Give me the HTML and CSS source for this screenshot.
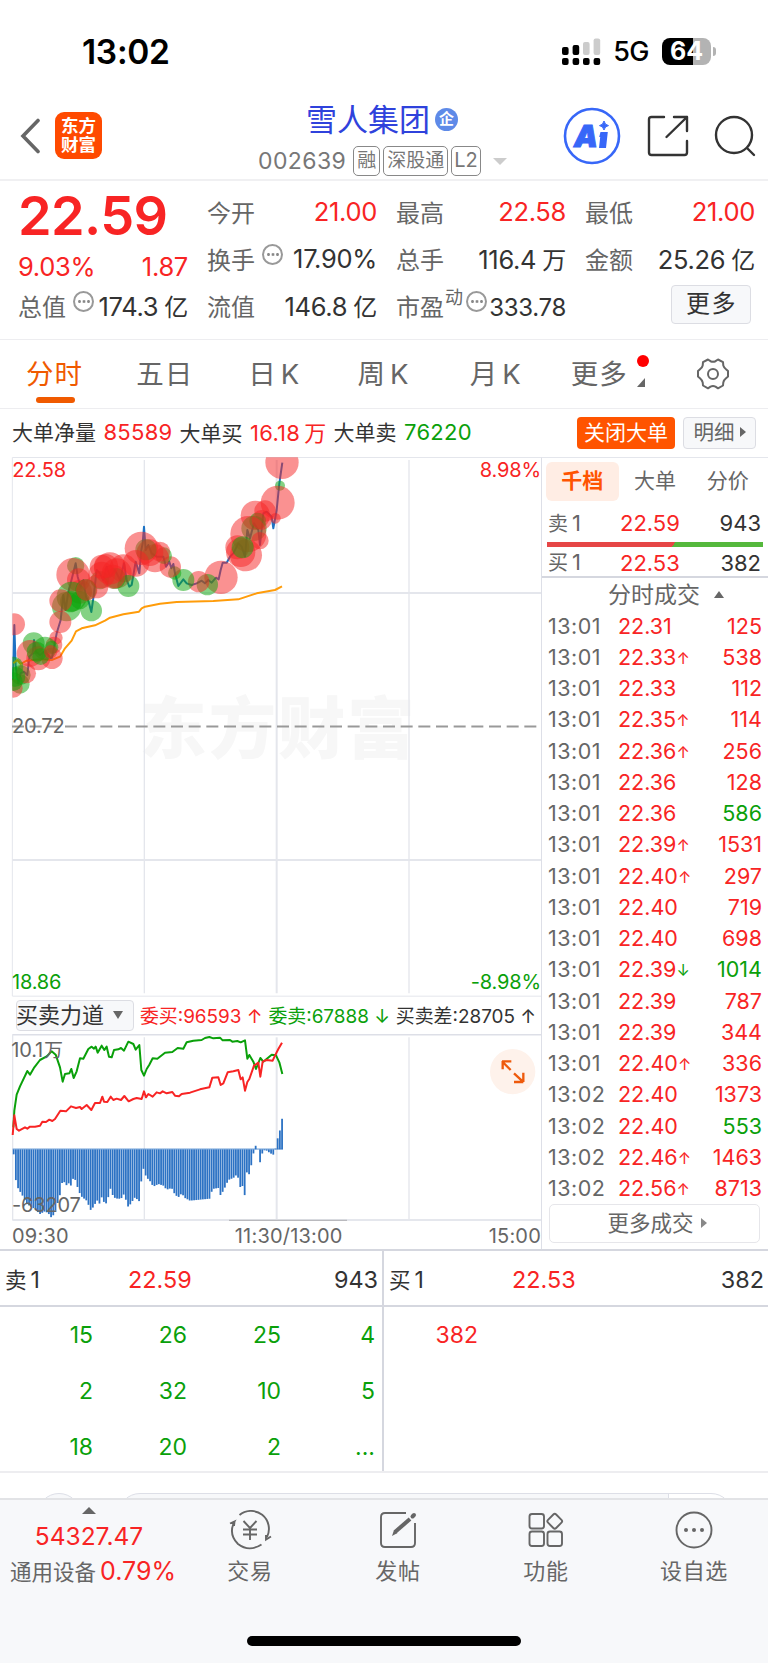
FILE: index.html
```html
<!DOCTYPE html>
<html lang="zh-CN">
<head>
  <meta charset="UTF-8">
  <meta name="viewport" content="width=device-width, initial-scale=1.0">
  <title>雪人集团 002639</title>
  <link rel="stylesheet" href="styles.css">
</head>
<body>
  <div class="status-bar">
    <span class="clock">13:02</span>
    <div class="status-right">
      <svg width="39" height="28" viewBox="0 0 39 28">
        <g fill="#000">
          <rect x="0" y="9" width="6.6" height="8" rx="2"/><rect x="10.6" y="7" width="6.6" height="10" rx="2"/>
          <rect x="0" y="20" width="6.6" height="7" rx="2"/><rect x="10.6" y="20" width="6.6" height="7" rx="2"/>
          <rect x="21" y="20" width="6.6" height="7" rx="2"/><rect x="31.6" y="20" width="6.6" height="7" rx="2"/>
        </g>
        <g fill="#ccc"><rect x="21" y="4" width="6.6" height="13" rx="2"/><rect x="31.6" y="0.5" width="6.6" height="16.5" rx="2"/></g>
      </svg>
      <span class="network">5G</span>
      <span class="battery">64</span>
      <span class="battery-tip"></span>
    </div>
  </div>

  <header>
    <div class="header-left">
      <svg width="22" height="36" viewBox="0 0 22 36"><path d="M18 2.5 3 18 18 33.5" fill="none" stroke="#666" stroke-width="3.6" stroke-linecap="round"/></svg>
      <div class="logo">东方<br>财富</div>
    </div>
    <div class="stock">
      <div class="stock-name">雪人集团<span class="badge">企</span></div>
      <div class="stock-code">002639<span class="tag">融</span><span class="tag">深股通</span><span class="tag">L2</span><i class="caret"></i></div>
    </div>
    <div class="header-right">
      <svg width="58" height="58" viewBox="0 0 58 58">
        <circle cx="29" cy="29" r="27" fill="none" stroke="#3767f8" stroke-width="2.6"/>
        <text class="ai" x="11" y="40">A</text>
        <path d="M37.5 25h7.300l-1.800 16h-7l1.200-11h-1z" fill="#3767f8"/>
        <path d="M41 14q.8 4 4.5 4.6Q41.800 19.200 41 23q-.8-3.800-4.500-4.400Q40.200 18 41 14z" fill="#3767f8" stroke="#3767f8"/>
      </svg>
      <svg width="42" height="42" viewBox="0 0 42 42" fill="none" stroke="#333" stroke-width="2.4" stroke-linecap="round" stroke-linejoin="round">
        <path d="M17 2H4.500Q2 2 2 4.500V37.500Q2 40 4.500 40H37.500Q40 40 40 37.500V26M27 2H40V16M40 2 19.500 22"/>
      </svg>
      <svg width="42" height="42" viewBox="0 0 42 42" fill="none" stroke="#333" stroke-width="2.400" stroke-linecap="round">
        <circle cx="20" cy="20" r="18"/><path d="M33 33 40 40"/>
      </svg>
    </div>
  </header>

  <section class="quote">
    <div class="cell price-cell"><b class="price">22.59</b></div>
    <div class="cell"><label>今开</label><span class="red">21.00</span></div>
    <div class="cell"><label>最高</label><span class="red">22.58</span></div>
    <div class="cell"><label>最低</label><span class="red">21.00</span></div>
    <div class="cell change"><span class="red">9.03%</span><span class="red">1.87</span></div>
    <div class="cell"><label>换手<i class="dots"></i></label><span>17.90%</span></div>
    <div class="cell"><label>总手</label><span>116.4<em>万</em></span></div>
    <div class="cell"><label>金额</label><span>25.26<em>亿</em></span></div>
    <div class="cell"><label>总值<i class="dots"></i></label><span>174.3<em>亿</em></span></div>
    <div class="cell"><label>流值</label><span>146.8<em>亿</em></span></div>
    <div class="cell pe"><label>市盈<sup>动</sup><i class="dots"></i></label><span>333.78</span></div>
    <div class="cell more-cell"><button class="more">更多</button></div>
  </section>

  <nav class="tabs">
    <a class="active">分时</a>
    <a>五日</a>
    <a>日<s>K</s></a>
    <a>周<s>K</s></a>
    <a>月<s>K</s></a>
    <a class="more-tab">更多<i class="red-dot"></i><i class="corner"></i></a>
    <svg width="32" height="32" viewBox="0 0 32 32" fill="none" stroke="#666" stroke-width="2" stroke-linejoin="round">
      <path d="M11 1.500 13.500 3.200Q16 4.200 18.500 3.200L21 1.500 26 4.200 26.300 7.500Q27 9.800 29 11.200L31 13V18.500L29 20.300Q26.800 22 26.300 24.500L26 27.500 21 30.300 18.500 28.600Q16 27.600 13.500 28.600L11 30.300 6 27.500 5.700 24.500Q5 22 3 20.300L1 18.500V13L3 11.200Q5.200 9.800 5.700 7.500L6 4.200Z"/>
      <circle cx="16" cy="16" r="5"/>
    </svg>
  </nav>

  <div class="big-order">
    <span>大单净量 <b class="red">85589</b></span>
    <span>大单买 <b class="red">16.18<em>万</em></b></span>
    <span>大单卖 <b class="green">76220</b></span>
    <button class="close-big">关闭大单</button>
    <button class="detail">明细<i></i></button>
  </div>

  <main>
    <div class="charts">
      <!-- 分时图 -->
      <svg class="main-chart" width="541" height="540" viewBox="0 141 1623 1620">
        <defs><clipPath id="plot"><rect x="37" y="142" width="1586" height="1618"/></clipPath></defs>
        <text class="watermark" x="418" y="1028">东方财富</text>
        <g stroke="#e4e6ec" fill="none">
          <path stroke-width="3" d="M37 1758V142.500H1623M37 1758.500H1623"/>
          <path stroke-width="4" d="M433 150V1750M1227 150V1750"/>
          <path stroke-width="6" d="M37 549H1623M37 1350H1623M830 150V1750"/>
        </g>
        <path class="mid" d="M36 949.500H1623"/>
        <g clip-path="url(#plot)">
          <polyline class="price-line" points="38,810 43,645 47,770 55,820 62,790 72,785 82,795 88,740 98,730 102,690 108,725 120,735 132,725 145,735 155,748 170,670 182,630 190,555 197,600 205,545 212,520 227,460 233,500 242,530 250,510 258,560 266,575 274,606 282,550 290,480 300,490 310,510 320,470 330,500 345,480 360,510 372,460 380,510 388,530 395,525 407,455 418,490 424,420 428,400 432,350 437,420 445,405 455,430 470,440 490,440 498,470 508,455 514,475 520,462 525,490 535,528 550,508 560,520 575,525 590,520 605,512 615,520 625,510 635,518 648,503 656,508 662,480 668,458 680,458 690,440 700,430 715,400 725,410 735,440 742,360 750,385 762,340 775,360 780,405 790,310 800,305 815,320 820,355 830,300 838,220 847,158"/>
          <polyline class="avg-line" points="40,760 52,750 62,762 80,752 120,748 155,750 180,740 195,715 215,692 228,664 245,655 285,646 315,632 330,623 370,613 417,605 425,595 435,590 480,581 530,576 640,573 715,568 770,550 825,540 846,529"/>
          <g id="bubbles"></g>
        </g>
        <text class="axis red-fill" x="37" y="202">22.58</text>
        <text class="axis red-fill" x="1623" y="202" text-anchor="end">8.98%</text>
        <text class="axis" x="36" y="970">20.72</text>
        <text class="axis green-fill" x="36" y="1736">18.86</text>
        <text class="axis green-fill" x="1623" y="1736" text-anchor="end">-8.98%</text>
      </svg>

      <div class="force-row">
        <button class="force">买卖力道<i></i></button>
        <span class="red">委买:96593 ↑</span>
        <span class="green">委卖:67888 ↓</span>
        <span>买卖差:28705 ↑</span>
      </div>

      <!-- 买卖力道 -->
      <svg class="force-chart" width="541" height="187" viewBox="0 190 1623 561">
        <g stroke="#e4e6ec" fill="none">
          <path stroke-width="5" stroke="#dddfe7" d="M37 192H1623M37 748H1623"/>
          <path stroke-width="4" d="M38 192V748M433 200V745M1227 200V745"/>
          <path stroke-width="6" d="M830 200V745"/>
        </g>
        <path d="M687 749H1041" stroke="#b9b9bd" stroke-width="4"/>
        <g id="bars"></g>
        <polyline class="sell-line" points="40,470 43,420 50,372 60,347 82,301 90,312 103,290 120,268 140,257 155,242 167,252 180,290 188,333 195,310 208,308 214,295 221,322 230,302 240,263 250,264 265,235 275,228 282,234 287,228 293,246 305,225 313,238 320,228 327,258 335,260 342,238 355,236 363,232 372,240 385,213 400,220 407,237 418,223 424,298 432,315 440,295 448,282 458,263 472,264 495,246 517,244 533,232 550,234 560,215 580,210 605,208 615,202 628,199 640,203 660,201 668,209 690,208 697,213 712,211 722,215 735,209 742,264 748,253 760,273 768,295 781,262 790,273 815,252 828,254 838,275 847,310"/>
        <polyline class="buy-line" points="38,493 43,434 50,475 57,480 75,470 82,474 90,468 105,468 120,465 127,453 138,454 148,447 157,451 165,445 181,420 198,422 213,407 228,412 240,409 245,415 260,403 274,418 285,397 300,397 307,378 312,393 322,394 332,378 340,388 350,384 363,388 373,376 386,392 400,385 410,382 425,385 432,362 438,380 445,370 458,378 470,365 480,368 488,362 500,368 517,364 525,375 537,377 545,370 570,366 600,356 628,350 637,321 655,320 662,343 670,338 683,305 700,302 715,298 722,326 728,320 735,360 742,334 748,325 762,285 775,276 781,318 788,273 800,268 818,270 825,255 835,235 846,216"/>
        <text class="axis" x="34" y="258">10.1<tspan dx="3" font-size="57">万</tspan></text>
        <text class="axis" x="36" y="725">-63207</text>
        <circle cx="1538" cy="303" r="68" fill="#fef2eb"/>
        <path d="M1508 271V296M1506 272H1534M1508 274 1532 298M1570 306V334M1542 334H1570M1542 308 1568 332" fill="none" stroke="#ee5a0c" stroke-width="7"/>
      </svg>

      <div class="times"><span>09:30</span><span>11:30/13:00</span><span>15:00</span></div>
    </div>

    <aside>
      <div class="side-tabs"><a class="active">千档</a><a>大单</a><a>分价</a></div>
      <div class="level"><span>卖<b>1</b></span><b class="red">22.59</b><b>943</b></div>
      <div class="ratio"></div>
      <div class="level buy-level"><span>买<b>1</b></span><b class="red">22.53</b><b>382</b></div>
      <div class="deal-title">分时成交<i></i></div>
      <div id="deals"></div>
      <button class="more-deals">更多成交<i></i></button>
    </aside>
  </main>

  <section class="depth">
    <div class="side">
      <div class="depth-head"><span>卖<b>1</b></span><b class="red">22.59</b><b>943</b></div>
      <div class="orders green">
        <span>15</span><span>26</span><span>25</span><span>4</span>
        <span>2</span><span>32</span><span>10</span><span>5</span>
        <span>18</span><span>20</span><span>2</span><span>...</span>
      </div>
    </div>
    <div class="side">
      <div class="depth-head"><span>买<b>1</b></span><b class="red">22.53</b><b>382</b></div>
      <div class="orders red"><span>382</span></div>
    </div>
  </section>

  <div class="peek"><i class="peek-circle"></i><i class="peek-box"></i></div>

  <footer>
    <div class="index">
      <i class="up"></i>
      <b class="red">54327.47</b>
      <div>通用设备<b class="red">0.79%</b></div>
    </div>
    <a>
      <svg width="44" height="40" viewBox="0 0 44 40" fill="none" stroke="#666" stroke-width="1.900">
        <path d="M11.500 5A18 18 0 0 1 39 27M2 13.500 6.500 11.500Q0 24 10 34 21 42.500 33.500 34.500M6.500 11.500 6 16M43 26.500 38 29.500 38 25"/>
        <path d="M15.500 11 22 18 28.500 11M22 18V30M15 19.500H29M15 24.500H29"/>
      </svg>
      交易
    </a>
    <a>
      <svg width="40" height="40" viewBox="0 0 40 40" fill="none" stroke="#666" stroke-width="1.900">
        <path d="M28 3H7Q3 3 3 7V33Q3 37 7 37H33Q37 37 37 33V13"/>
        <path d="M17 22 32 9" stroke-width="4"/><path d="M14 26 16 20 19.500 23Z" fill="#666" stroke="none"/><path d="M34.500 6.500 36 5" stroke-width="4" stroke-linecap="round"/>
      </svg>
      发帖
    </a>
    <a>
      <svg width="40" height="40" viewBox="0 0 40 40" fill="none" stroke="#666" stroke-width="1.900">
        <rect x="3.500" y="4" width="14.500" height="14.500" rx="2.500"/><rect x="3.500" y="21.500" width="14.500" height="14.500" rx="2.500"/><rect x="21.500" y="21.500" width="14.500" height="14.500" rx="2.500"/>
        <rect x="23" y="5.500" width="11.500" height="11.500" rx="2" transform="rotate(45 28.750 11.250)"/>
      </svg>
      功能
    </a>
    <a>
      <svg width="40" height="40" viewBox="0 0 40 40"><circle cx="20" cy="20" r="17.500" fill="none" stroke="#666" stroke-width="1.900"/><g fill="#666"><circle cx="12" cy="20" r="2"/><circle cx="20" cy="20" r="2"/><circle cx="28" cy="20" r="2"/></g></svg>
      设自选
    </a>
    <div class="home-bar"></div>
  </footer>

  <script>
    // 时间 价格 方向 手数 颜色
    const deals = [
      ['13:01', '22.31', '', 125, 'red'],
      ['13:01', '22.33', '↑', 538, 'red'],
      ['13:01', '22.33', '', 112, 'red'],
      ['13:01', '22.35', '↑', 114, 'red'],
      ['13:01', '22.36', '↑', 256, 'red'],
      ['13:01', '22.36', '', 128, 'red'],
      ['13:01', '22.36', '', 586, 'green'],
      ['13:01', '22.39', '↑', 1531, 'red'],
      ['13:01', '22.40', '↑', 297, 'red'],
      ['13:01', '22.40', '', 719, 'red'],
      ['13:01', '22.40', '', 698, 'red'],
      ['13:01', '22.39', '↓', 1014, 'green'],
      ['13:01', '22.39', '', 787, 'red'],
      ['13:01', '22.39', '', 344, 'red'],
      ['13:01', '22.40', '↑', 336, 'red'],
      ['13:02', '22.40', '', 1373, 'red'],
      ['13:02', '22.40', '', 553, 'green'],
      ['13:02', '22.46', '↑', 1463, 'red'],
      ['13:02', '22.56', '↑', 8713, 'red']
    ];

    document.getElementById('deals').innerHTML = deals.map(d =>
      `<div class="deal"><span>${d[0]}</span><b class="red">${d[1]}<i class="${d[2] === '↓' ? 'green' : 'red'}">${d[2]}</i></b><b class="${d[4]}">${d[3]}</b></div>`
    ).join('');

    // x, y, 半径, 买(r)/卖(g)
    const bubbles = [
      [846,157,50,'r'],[840,227,15,'g'],[833,278,51,'r'],[826,325,16,'r'],[795,303,32,'r'],[766,316,44,'r'],
      [762,355,38,'g'],[773,333,25,'g'],[785,330,30,'r'],[780,392,26,'r'],[745,372,54,'r'],[738,436,48,'r'],
      [722,427,44,'r'],[712,412,36,'r'],[728,412,33,'g'],[663,502,50,'r'],[622,524,32,'g'],[596,515,32,'r'],
      [550,510,33,'g'],[524,489,20,'g'],[511,471,32,'r'],[491,437,25,'g'],[480,425,30,'r'],[465,445,42,'r'],
      [450,428,40,'r'],[438,419,32,'g'],[424,415,50,'r'],[408,460,40,'r'],[370,475,42,'r'],[350,490,45,'r'],
      [385,528,33,'g'],[345,505,32,'g'],[300,510,28,'g'],[330,475,48,'r'],[305,470,36,'r'],[305,495,40,'r'],
      [340,500,36,'r'],[318,468,36,'r'],[290,530,35,'r'],[227,467,26,'g'],[219,494,50,'r'],[236,510,35,'r'],
      [240,545,36,'r'],[215,560,45,'g'],[200,590,44,'g'],[212,575,32,'g'],[258,540,32,'g'],[240,570,28,'g'],
      [260,540,32,'r'],[182,572,34,'r'],[274,602,32,'g'],[181,636,33,'r'],[42,643,33,'r'],[168,683,20,'r'],
      [162,705,25,'r'],[156,745,32,'r'],[101,700,33,'g'],[135,715,35,'g'],[90,730,40,'r'],[115,745,36,'r'],
      [110,725,30,'g'],[122,740,25,'g'],[155,712,20,'g'],[62,795,30,'g'],[60,822,29,'g'],[78,790,30,'r'],
      [40,835,28,'r'],[40,770,30,'g'],[46,800,30,'g'],[40,815,28,'g'],[152,725,20,'r']
    ];
    document.getElementById('bubbles').innerHTML = bubbles.map(b =>
      `<circle class="${b[3] === 'r' ? 'buy' : 'sell'}" cx="${b[0]}" cy="${b[1]}" r="${b[2]}"/>`
    ).join('');

    const force = [
      [38,560],[42,548],[48,634],[55,655],[65,670],[80,700],[100,712],[120,730],[135,722],[145,728],[155,742],
      [165,725],[175,690],[182,665],[188,625],[198,645],[205,637],[213,645],[220,622],[228,630],[235,660],
      [245,678],[260,690],[273,720],[285,700],[295,685],[300,705],[306,675],[315,705],[322,690],[332,652],
      [340,680],[355,685],[365,682],[372,670],[385,710],[398,690],[405,680],[418,692],[425,620],[432,587],
      [438,620],[448,628],[460,648],[475,640],[490,645],[500,657],[515,652],[525,672],[535,680],[545,668],
      [555,682],[570,690],[590,688],[610,686],[630,684],[637,655],[655,652],[662,675],[675,650],[685,628],
      [700,622],[710,612],[716,625],[722,655],[728,645],[735,678],[741,600],[748,612],[755,578],[761,545],
      [768,522],[775,540],[781,580],[788,542],[795,538],[800,540],[807,545],[815,550],[820,552],[826,536],
      [833,503],[840,478],[847,440],[860,440]
    ];
    const base = 536;
    let bars = '';
    for (let x = 41; x <= 849; x += 6.6) {
      const i = force.findIndex(p => p[0] > x);
      const [x0, y0] = force[i - 1];
      const [x1, y1] = force[i];
      const y = y0 + (y1 - y0) * (x - x0) / (x1 - x0);
      bars += `<rect x="${(x - 2.7).toFixed(1)}" y="${Math.min(y, base).toFixed(1)}" width="5.4" height="${Math.abs(y - base).toFixed(1)}"/>`;
    }
    document.getElementById('bars').innerHTML = `<rect x="38" y="534" width="811" height="2"/>` + bars;
  </script>
</body>
</html>
```
FILE: styles.css
```css
* {
  box-sizing: border-box;
}
body {
  margin: 0;
  width: 768px;
  height: 1663px;
  overflow: hidden;
  background: #fff;
  color: #333;
  font-family: Inter, "Noto Sans CJK SC", sans-serif;
  font-size: 24px;
  font-weight: 400;
}
b, i, em, s {
  font-weight: inherit;
  font-style: normal;
  text-decoration: none;
}
button {
  font: inherit;
  padding: 0;
}
svg {
  display: block;
  flex: none;
}
.red {
  color: #f82424;
}
.green {
  color: #0aa00a;
}

/* status bar */
.status-bar {
  height: 97px;
  padding: 6px 52px 0 82px;
  display: flex;
  align-items: center;
  justify-content: space-between;
  color: #000;
}
.clock {
  font-size: 33.500px;
  font-weight: 600;
  letter-spacing: -0.3px;
}
.status-right {
  display: flex;
  align-items: center;
}
.network {
  font-size: 27px;
  font-weight: 500;
  margin: 0 13px 0 12px;
  letter-spacing: -0.5px;
}
.battery {
  width: 49px;
  height: 27px;
  border-radius: 8px;
  background: linear-gradient(90deg, #000 64%, #b3b3b3 64%);
  color: #fff;
  font-size: 25px;
  font-weight: 700;
  line-height: 27px;
  text-align: center;
}
.battery-tip {
  width: 3px;
  height: 9px;
  margin-left: 2px;
  border-radius: 0 4px 4px 0;
  background: #b3b3b3;
}

/* header */
header {
  height: 84px;
  border-bottom: 2px solid #f0f0f2;
  padding: 0 12px 0 20px;
  display: grid;
  grid-template-columns: 238px 1fr 193px;
}
.header-left {
  display: flex;
  align-items: center;
  gap: 13px;
  padding-bottom: 5px;
}
.logo {
  width: 47px;
  height: 47px;
  border-radius: 9px;
  background: #ff4a00;
  color: #fff;
  font-size: 17.500px;
  font-weight: 700;
  line-height: 19px;
  padding-top: 4px;
  text-align: center;
}
.stock-name {
  display: flex;
  align-items: center;
  height: 46px;
  padding: 0 0 5px 48px;
  color: #2f42dc;
  font-size: 31px;
}
.badge {
  width: 23px;
  height: 23px;
  margin: 3px 0 0 5px;
  border-radius: 50%;
  background: #5e8ae8;
  color: #fff;
  font-size: 15px;
  font-weight: 700;
  line-height: 22px;
  text-align: center;
}
.stock-code {
  display: flex;
  align-items: center;
  height: 36px;
  color: #777;
  font-size: 23px;
  letter-spacing: 0.4px;
}
.tag {
  height: 30px;
  margin-left: 3px;
  padding: 0 3px;
  border: 1px solid #888;
  border-radius: 5px;
  font-size: 19px;
  line-height: 27px;
  letter-spacing: 0;
}
.tag:first-of-type {
  margin-left: 7px;
}
.tag:last-of-type {
  padding: 0 2px;
  font-size: 20px;
}
.caret {
  margin-left: 12px;
  border: 7px solid transparent;
  border-top-color: #ccc;
  border-bottom: 0;
}
.header-right {
  display: flex;
  align-items: center;
  justify-content: space-between;
  padding-bottom: 4px;
}
.ai {
  fill: #3767f8;
  stroke: #3767f8;
  font: italic 900 30px Inter, sans-serif;
}

/* quote */
.quote {
  height: 159px;
  padding: 7px 13px 11px 19px;
  border-bottom: 1px solid #ededf0;
  display: grid;
  grid-template-columns: repeat(4, 169px);
  grid-template-rows: repeat(3, 47px);
  justify-content: space-between;
}
.cell {
  display: flex;
  align-items: center;
  justify-content: space-between;
  white-space: nowrap;
}
.cell > span {
  font-size: 25.500px;
  letter-spacing: -0.3px;
}
.cell em {
  margin-left: 6px;
  font-size: 24px;
}
.cell label {
  margin-left: -1px;
  color: #666;
  display: flex;
  align-items: center;
}
.price {
  color: #f82424;
  font-size: 54px;
  font-weight: 600;
  line-height: 50px;
  letter-spacing: -0.6px;
  margin: 8px 0 0 -1px;
}
.change {
  padding-top: 15px;
}
.change span:first-child {
  margin-left: -1px;
}
.dots {
  width: 21px;
  height: 21px;
  margin: -8px 0 0 7px;
  border: 2px solid #999;
  border-radius: 50%;
  background: radial-gradient(circle at 50% 50%, #888 1.200px, transparent 1.600px) center / 4.500px 5px repeat-x;
  background-clip: content-box;
  padding: 0 1.500px;
}
.cell sup {
  align-self: flex-start;
  font-size: 18px;
  line-height: 18px;
  margin: 1px 0 0 1px;
}
.pe .dots {
  margin-left: 3px;
}
.pe > span {
  padding-top: 3px;
  font-size: 24px;
}
.more {
  width: 80px;
  height: 39px;
  margin: -3px 0 0 85px;
  border: 1px solid #dcdde3;
  border-radius: 4px;
  background: #f7f8fa;
  color: #333;
  line-height: 36px;
  letter-spacing: 1.500px;
  text-indent: 1px;
}

/* period tabs */
.tabs {
  height: 69px;
  border-bottom: 1px solid #ededf0;
  padding: 0 39px 0 26px;
  display: flex;
  align-items: center;
  justify-content: space-between;
  color: #666;
  font-size: 27.500px;
  letter-spacing: 1px;
}
.tabs a {
  position: relative;
  margin-top: -4px;
}
.tabs a:nth-child(2), .tabs a:nth-child(3) {
  margin-left: -2px;
  margin-right: 2px;
}
.tabs a:nth-child(5) {
  margin-left: 5px;
  margin-right: -5px;
}
.tabs s {
  margin-left: 4px;
}
.tabs .active {
  color: #f05a00;
}
.tabs .active::after {
  content: "";
  position: absolute;
  left: 10px;
  bottom: -11px;
  width: 39px;
  height: 6px;
  border-radius: 3px;
  background: #f05a00;
}
.tabs .more-tab {
  margin-left: -1px;
  margin-right: 14px;
}
.red-dot {
  position: absolute;
  top: 3px;
  right: -21px;
  width: 12px;
  height: 12px;
  border-radius: 50%;
  background: #f00;
}
.corner {
  position: absolute;
  right: -17px;
  bottom: 5px;
  border-left: 8px solid transparent;
  border-bottom: 9px solid #666;
}

/* big order row */
.big-order {
  height: 48px;
  padding: 0 12px;
  display: flex;
  align-items: center;
  font-size: 21px;
  white-space: nowrap;
}
.big-order span {
  margin: -4px 7px 0 0;
  word-spacing: 1.500px;
}
.big-order b {
  font-size: 22px;
  letter-spacing: 0.3px;
}
.big-order em {
  margin-left: 4px;
}
.close-big {
  width: 98px;
  height: 32px;
  margin-left: auto;
  border: 0;
  border-radius: 4px;
  background: #ff5400;
  color: #fff;
  line-height: 30px;
}
.detail {
  width: 73px;
  height: 32px;
  margin-left: 8px;
  border: 1px solid #dcdde3;
  border-radius: 4px;
  background: #f7f8fa;
  color: #666;
  font-size: 20.500px;
  line-height: 28px;
}
.detail i, .more-deals i {
  display: inline-block;
  margin-left: 5px;
  border: 5px solid transparent;
  border-left: 6px solid #666;
  border-right: 0;
  vertical-align: 3px;
}

/* charts */
main {
  display: flex;
  height: 792px;
}
.charts {
  width: 541px;
}
.watermark {
  font-size: 202px;
  font-weight: 900;
  letter-spacing: 6px;
  fill: #f7f7f7;
}
.mid {
  stroke: #999;
  stroke-width: 6;
  stroke-dasharray: 36 17;
}
.price-line, .avg-line, .sell-line, .buy-line {
  fill: none;
  stroke-width: 6;
  stroke-linejoin: round;
}
.price-line {
  stroke: #1c72c4;
}
.avg-line {
  stroke: #ff9c0a;
}
.sell-line {
  stroke: #0aa00a;
}
.buy-line {
  stroke: #f82424;
}
.buy {
  fill: rgba(245, 35, 35, 0.5);
}
.sell {
  fill: rgba(10, 165, 10, 0.5);
}
#bars {
  fill: #2c72c4;
}
.axis {
  font-size: 60px;
  letter-spacing: -0.5px;
  fill: #666;
}
.red-fill {
  fill: #f82424;
}
.green-fill {
  fill: #0aa00a;
}
.force-row {
  height: 37px;
  padding: 0 5px 0 16px;
  display: flex;
  align-items: center;
  justify-content: space-between;
  font-size: 18.900px;
  white-space: nowrap;
}
.force-row span {
  margin-top: -3px;
}
.force {
  width: 118px;
  height: 31px;
  border: 1px solid #dcdde3;
  border-radius: 4px;
  background: #f7f8fa;
  color: #333;
  font-size: 22px;
  line-height: 29px;
  text-align: left;
  text-indent: -1px;
}
.force i {
  display: inline-block;
  margin-left: 9px;
  border: 5px solid transparent;
  border-top: 8px solid #666;
  border-bottom: 0;
  vertical-align: 4px;
}
.times {
  height: 28px;
  padding: 2px 0 0 12px;
  display: flex;
  align-items: center;
  justify-content: space-between;
  color: #666;
  font-size: 20px;
  letter-spacing: 0.2px;
}
.times span:nth-child(2) {
  margin-left: 20px;
}

/* right side */
aside {
  width: 227px;
  border-left: 1px solid #dddfe7;
  border-top: 1px solid #e4e6ec;
}
.side-tabs {
  height: 49px;
  padding: 4px;
  display: flex;
  color: #666;
  font-size: 21px;
}
.side-tabs a {
  flex: 1;
  height: 39px;
  line-height: 38px;
  border-radius: 6px;
  text-align: center;
}
.side-tabs .active {
  background: #ffede4;
  color: #ff5400;
  font-weight: 700;
}
.level {
  height: 32px;
  padding: 0 7px 0 6px;
  display: grid;
  grid-template-columns: 60px 1fr 60px;
  align-items: center;
  font-size: 22px;
}
.buy-level {
  height: 29px;
  padding-top: 2px;
}
.level span {
  margin-top: -2px;
  color: #666;
  font-size: 20px;
}
.level span b {
  margin-left: 4px;
  font-size: 22px;
}
.level > b:nth-child(2) {
  padding-left: 12px;
}
.level > b:last-child {
  text-align: right;
}
.ratio {
  height: 5px;
  margin: 3px 5px 0;
  background: linear-gradient(125deg, #e64646 58.500%, #55b83c 58.500%);
}
.deal-title {
  height: 34px;
  border-top: 2px solid #d5d7df;
  color: #666;
  font-size: 23px;
  line-height: 34px;
  padding-left: 66px;
}
.deal-title i {
  display: inline-block;
  margin-left: 14px;
  border: 5px solid transparent;
  border-bottom: 7px solid #666;
  border-top: 0;
  vertical-align: 5px;
}
.deal {
  height: 31.260px;
  padding: 0 6px 0 6px;
  display: grid;
  grid-template-columns: 70px 1fr 60px;
  align-items: center;
  font-size: 21.500px;
}
.deal span {
  color: #666;
  letter-spacing: 0.5px;
}
.deal b {
  white-space: nowrap;
}
.deal i {
  font-size: 16px;
  vertical-align: 1px;
  line-height: 1;
}
.deal b:last-child {
  text-align: right;
}
.more-deals {
  display: block;
  width: 211px;
  height: 39px;
  margin: 0 0 0 7px;
  padding-left: 5px;
  border: 1px solid #e6e6ea;
  border-radius: 5px;
  background: #fff;
  color: #666;
  font-size: 21.500px;
  line-height: 36px;
}
.more-deals i {
  margin-left: 7px;
  border-left-color: #888;
}

/* depth */
.depth {
  display: flex;
  height: 224px;
  border-top: 2px solid #d5d7df;
  border-bottom: 2px solid #ededf0;
}
.side {
  width: 385px;
  height: 220px;
}
.side:first-child {
  width: 384px;
  border-right: 2px solid #d5d7df;
}
.depth-head {
  height: 56px;
  padding: 2px 4px 0 5px;
  border-bottom: 2px solid #d5d7df;
  display: grid;
  grid-template-columns: 123px 1fr 80px;
  align-items: center;
  font-size: 23.400px;
}
.depth-head span {
  margin-top: -2px;
  font-size: 21.500px;
}
.depth-head span b {
  margin-left: 4px;
  font-size: 23px;
}
.depth-head > b:last-child {
  text-align: right;
}
.orders {
  padding: 0 7px 0 0;
  display: grid;
  grid-template-columns: repeat(4, 94px);
  grid-auto-rows: 56px;
  justify-content: end;
  align-items: center;
  text-align: right;
  font-size: 23px;
}
.orders.red {
  padding-right: 8px;
}

/* card hidden under the bottom bar */
.peek {
  position: relative;
  height: 25px;
  overflow: hidden;
}
.peek-circle {
  position: absolute;
  left: 37px;
  top: 20px;
  width: 44px;
  height: 44px;
  border: 1px solid #dddfe7;
  border-radius: 50%;
  background: #f7f8fa;
}
.peek-box {
  position: absolute;
  left: 118px;
  top: 20px;
  width: 615px;
  height: 44px;
  border: 1px solid #dddfe7;
  border-radius: 22px;
  background: linear-gradient(90deg, #f7f8fa 549px, #dddfe7 549px, #dddfe7 550px, #fff 550px);
}

/* bottom bar */
footer {
  position: relative;
  height: 165px;
  border-top: 2px solid #e2e3e6;
  background: #f7f8fa;
  display: grid;
  grid-template-columns: 176px repeat(4, 148px);
  color: #666;
  font-size: 22px;
}
footer a {
  display: flex;
  flex-direction: column;
  align-items: center;
  padding-top: 10px;
  line-height: 43px;
  letter-spacing: 0.7px;
}
.index {
  display: flex;
  flex-direction: column;
  align-items: center;
  padding: 7px 0 0 10px;
  line-height: 35px;
  font-size: 21.500px;
  white-space: nowrap;
}
.index > b {
  margin: 5px 8px 0 0;
}
.index b {
  font-size: 24.500px;
}
.index div b {
  margin-left: 4px;
  font-size: 25px;
}
.up {
  margin-right: 8px;
  border: 7px solid transparent;
  border-bottom-color: #666;
  border-top: 0;
}
.home-bar {
  position: absolute;
  left: 247px;
  top: 136px;
  width: 274px;
  height: 10px;
  border-radius: 5px;
  background: #000;
}
```
